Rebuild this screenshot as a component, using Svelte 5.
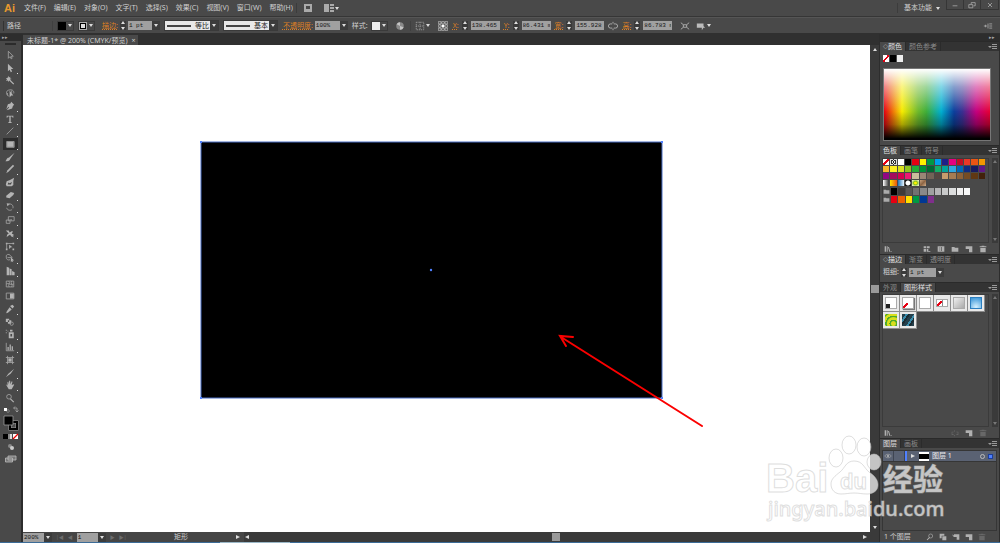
<script lang="ts">
	const menus = ['文件(F)', '编辑(E)', '对象(O)', '文字(T)', '选择(S)', '效果(C)', '视图(V)', '窗口(W)', '帮助(H)'];

	// fill = solid shape, line = stroked shape, both on a 12x12 grid
	const tools = [
		{ name: '选择工具', line: 'M4 1.5V10l2-2 1.4 2.6 1.2-.7L7.400 7.500H10z', fill: '' },
		{ name: '直接选择工具', fill: 'M3.500 1V10l2-2 1.500 3 1.500-.7L7.200 7.300H10z', line: '', more: true },
		{ name: '魔棒工具', fill: 'M4 1l.7 2L6.500 2 6 4l2 .7L6 5.500l5 5-1 1-5-5L4 8.500 3.300 6.500 1 7l1.500-2L1 3.500l2 0z', line: '' },
		{ name: '套索工具', fill: 'M5.500 3v8.500l2-2.500 2.500 0z', line: 'M4 9C1 8.500 1 3 4.500 2.500 8.500 1.500 11 3 10.500 6.500M3 6c0 2 0 3 1 4M8 3v4' },
		{ name: '钢笔工具', fill: 'M7.500 1l3.500 3.500-1.500 1.500L8.500 9 2 11l3-3.500-.7-.6L1.500 10 3.500 4 6.500 3z', line: '', more: true },
		{ name: '文字工具', fill: 'M2 2h8v2.500H9.300L8.500 3H6.800v6.500L8 10v.7H4V10l1.200-.5V3H3.500L2.700 4.500H2z', line: '', more: true },
		{ name: '直线段工具', fill: '', line: 'M2 10l8-8', more: true },
		{ name: '矩形工具', fill: 'M2.500 3.500h8v6h-8z', line: 'M2 3h9v7H2z', more: true, active: true },
		{ name: '画笔工具', fill: 'M11.500 1L6.500 8C5.500 11 3 11 .5 11c1.500-.8 1-4 4-4z', line: '' },
		{ name: '铅笔工具', fill: 'M9.500 1L11 2.500 4.500 9 1.500 11 3 7.500z', line: '', more: true },
		{ name: '斑点画笔工具', fill: 'M11 1L10 4.500v5L8 11H2L1 9l1-4 4-1.500zM4 6.500L3.300 9H7l1.500-3-3 1.500z', line: '' },
		{ name: '橡皮擦工具', fill: 'M7 2.500l4 1-1 2.500-4.500 4-4-1v-2z', line: '', more: true },
		{ name: '旋转工具', fill: 'M2 1.500l4 .5-3 3z', line: 'M3 3.500C7 .5 10.500 4 9.500 7.500M8.500 9C6 11 2.500 9.500 2 7', more: true },
		{ name: '比例缩放工具', fill: 'M6 5h2v2z', line: 'M4 2h7v5H4zM1.500 6h4.500v4h-4.500z', more: true },
		{ name: '宽度工具', fill: 'M1 3l3.500 0 1 2.500 3-2 1 1-1.500 2 3 2L9 9.500l2 1.500-3-.5L6 8 3.500 9.500 2 11l.5-3 2-1.500z', line: '', more: true },
		{ name: '自由变换工具', fill: 'M5 4.500l4 3H7l-2 2zM1 2h2v2H1zM9 2h2v2H9zM1 9h2v2H1zM9 9h2v2H9z', line: 'M2 3h8M2 3v7' },
		{ name: '形状生成器工具', fill: 'M7 5l4 4H9l1 2-2-1-1 1z', line: 'M1.500 5a2.500 2.500 0 0 1 5-1.500 2.500 2.500 0 0 1 2 2.500M1.500 5C1.500 8 4 9 6 8M3 5.500h5', more: true },
		{ name: '透视网格工具', fill: 'M2 1l3 1v9H2zM5.500 3l2.500 1v7H5.500zM8.500 6l3 1.500V11h-3z', line: '', more: true },
		{ name: '网格工具', fill: '', line: 'M1.500 2.500h9v7h-9zM1.500 6C4 4 7 8 10.500 6M4.500 2.500C7 5 3 7 5 9.500M8 2.500C6 5 10 7 8 9.500' },
		{ name: '渐变工具', fill: 'M6 3h5v6H6z', line: 'M1.500 2.500h9v7h-9z' },
		{ name: '吸管工具', fill: 'M9 1l2 2-2 2.500-3-3zM5.500 4L8 6.500 3.500 10.500 1.500 11 2 9z', line: '', more: true },
		{ name: '混合工具', fill: 'M1 2h4v4H1zM3.500 4h4v4h-4z', line: 'M6 8a2 2 0 1 0 4 0 2 2 0 1 0-4 0' },
		{ name: '符号喷枪工具', fill: 'M6 1h3v2H6zM4.500 4h6v7h-6zM6.500 6v3h2V6zM1 1h1v1H1zM3 2h1v1H3zM1 4h1v1H1z', line: '', more: true },
		{ name: '柱形图工具', fill: 'M3 6h1.500v4H3zM5.500 3h1.500v7H5.500zM8 5h1.500v5H8z', line: 'M1.500 1v9.500H11', more: true },
		{ name: '画板工具', fill: 'M4 4h4v4H4z', line: 'M3 1v10M9 1v10M1 3h10M1 9h10' },
		{ name: '切片工具', fill: 'M11 1L7 6.500 5 8 4 7zM4 7L5 8 1 11z', line: '', more: true },
		{ name: '抓手工具', fill: 'M1 5l2 1.500V2.500l1-.5.7 3 .3-4h1.200l.3 4 1.500-3.500 1 .5-1 4L10.500 5l.5.7L8 11H4.500z', line: '', more: true },
		{ name: '缩放工具', fill: 'M7 6.500l4 4-1 1-4-4z', line: 'M2 4.500a2.800 2.800 0 1 0 5.600 0 2.800 2.800 0 1 0-5.600 0' }
	];

	const swatches = [
		['none', 'reg', '#ffffff', '#000000', '#e60012', '#fff100', '#009944', '#00a0e9', '#1d2088', '#e4007f', '#c30d23', '#e83828', '#ea5514', '#f39800'],
		['#f8b62d', '#fcee21', '#d9e021', '#8fc31f', '#22ac38', '#009139', '#006934', '#13ae67', '#00a29a', '#2ea7e0', '#0068b7', '#0f2c82', '#171c61', '#601986'],
		['#920783', '#a40b5d', '#d4004f', '#ea1a73', '#c9bc9c', '#998675', '#736357', '#534741', '#c69c6d', '#a67c52', '#8c6239', '#754c24', '#603813', '#42210b'],
		['fade', 'amber', 'sky', 'ring', 'leaf', 'clay']
	];
	const grays = ['#000000', '#3e3a39', '#595757', '#727171', '#898989', '#9fa0a0', '#b5b5b6', '#c9caca', '#dcdddd', '#efefef', '#f7f8f8'];
	const brights = ['#e60012', '#eb6100', '#ffe100', '#009944', '#003894', '#7f2f8c'];

	const transforms = [
		{ label: 'X:', value: '138.465 mm' },
		{ label: 'Y:', value: '86.431 mm' },
		{ label: '宽:', value: '155.928 mm', link: true },
		{ label: '高:', value: '86.783 mm' }
	];

	const styles = ['plain', 'shadow', 'empty', 'split', 'silver', 'azure', 'jungle', 'marine'];

	const glyphs = {
		library: 'M1 2h2v8H1zM4 2h1.500v8H4zM6 3l1.500 0 2 7H8zM10 9h1.500v1H10z',
		kinds: 'M1 2h4v3H1zM6 2h4v3H6zM1 6h4v4H1zM6 6h2v3h3v1H6z',
		options: 'M1 2h10v8H1zM3 4v1h2V4zM3 7v1h2V7zM6 3v6h1V3z',
		folder: 'M1 3h4l1 1h5v6H1z',
		page: 'M1 2h10v9H6V6H1z',
		trash: 'M4 1h4v1h3v1.500H1V2h3zM2 4.500h8V11H2z',
		unlink: 'M1 4h3v1H2v3h2v1H1zM8 4h3v5H8V8h2V5H8zM5 2h1v2H5zM5 9h1v2H5z',
		mask: 'M1 1h7v3H4v4H1zM5 5h6v6H5z',
		sublayer: 'M1 2l2 2V2h8v8H7V6H3L1 4z'
	};
</script>

{#snippet glyph(name: string, label: string, dim = false)}
	<button class="glyph" class:dim aria-label={label}>
		<svg viewBox="0 0 12 12"><path d={glyphs[name]} fill-rule="evenodd" /></svg>
	</button>
{/snippet}

{#snippet spinner()}
	<span class="spinner"><i class="up"></i><i class="down"></i></span>
{/snippet}

{#snippet tabs(names: string[], active: number, arrows = false)}
	<div class="tabs" role="tablist">
		{#each names as name, i}
			<button role="tab" class="tab" class:active={i === active} aria-selected={i === active}>
				{#if arrows && i === active}<span class="updown">◇</span>{/if}{name}
			</button>
		{/each}
		<button class="panel-menu" aria-label="面板菜单"><i class="down"></i><span></span></button>
	</div>
{/snippet}

<div class="app">
	<header class="menubar">
		<strong class="logo">Ai</strong>
		<nav>
			{#each menus as menu}<button>{menu}</button>{/each}
		</nav>
		<button class="bridge" aria-label="Bridge"><svg viewBox="0 0 10 10"><path d="M1 1h8v8H1zM3 3v3h4V3z" fill-rule="evenodd" /></svg></button>
		<button class="arrange" aria-label="排列文档"><svg viewBox="0 0 10 10"><path d="M0 1h5v8H0zM6 1h4v2H6zM6 4h4v2H6zM6 7h4v2H6z" /></svg><i class="down"></i></button>
		<button class="workspace">基本功能<i class="down"></i></button>
		<div class="window">
			<button aria-label="最小化"><svg viewBox="0 0 10 10"><path d="M2 6h6" /></svg></button>
			<button aria-label="还原"><svg viewBox="0 0 10 10"><path d="M4 4V2h5v4H7M1 4.500h5v4H1z" /></svg></button>
			<button aria-label="关闭"><svg viewBox="0 0 10 10"><path d="M2.500 2.500l5 5M7.500 2.500l-5 5" /></svg></button>
		</div>
	</header>

	<div class="control">
		<span class="kind">路径</span>
		<button class="pick" aria-label="填色"><span class="chip black"></span><i class="down"></i></button>
		<button class="pick" aria-label="描边颜色"><span class="chip outline"></span><i class="down"></i></button>
		<label class="field">
			<span class="hot">描边:</span>
			{@render spinner()}
			<span class="combo"><select class="short"><option>1 pt</option></select><i class="down"></i></span>
		</label>
		<button class="profile"><span class="stroke"></span><b>等比</b><i class="down"></i></button>
		<button class="profile"><span class="stroke"></span><b>基本</b><i class="down"></i></button>
		<label class="field opacity">
			<span class="hot">不透明度:</span>
			<span class="combo"><select class="wide"><option>100%</option></select><i class="down"></i></span>
		</label>
		<span class="style-label">样式:</span>
		<button class="pick" aria-label="图形样式"><span class="chip white"></span><i class="down"></i></button>
		<button class="icon recolor" aria-label="重新着色图稿">
			<svg viewBox="0 0 12 12"><circle cx="6" cy="6" r="4.500" fill="#8a8a8a" /><path d="M6 6V1.500A4.500 4.500 0 0 0 2 4zM6 6l4.300 1.500A4.500 4.500 0 0 1 6 10.500z" fill="#c5c5c5" /></svg>
		</button>
		<button class="icon align" aria-label="对齐">
			<svg viewBox="0 0 12 12"><path d="M1.500 1.500h9v9h-9zM6 1v10M1 6h10" stroke="#a0a0a0" stroke-dasharray="1.500 1" fill="none" /></svg><i class="down"></i>
		</button>
		<button class="icon anchor" aria-label="参考点">
			<svg viewBox="0 0 12 12"><path d="M2 2h8v8H2zM6 2v8M2 6h8" stroke="#aaa" fill="none" /><path d="M.5.5h3v3h-3zM4.500.5h3v3h-3zM8.500.5h3v3h-3zM.5 4.500h3v3h-3zM8.500 4.500h3v3h-3zM.5 8.500h3v3h-3zM4.500 8.500h3v3h-3zM8.500 8.500h3v3h-3z" fill="#555" stroke="#ccc" stroke-width=".7" /><path d="M4.500 4.500h3v3h-3z" fill="#fff" /></svg>
		</button>
		{#each transforms as t}
			<label class="field transform">
				<span class="hot">{t.label}</span>
				{@render spinner()}
				<input value={t.value} />
			</label>
			{#if t.link}
				<button class="icon link" aria-label="约束宽度和高度比例">
					<svg viewBox="0 0 12 12"><path d="M5 3.500H3a2.500 2.500 0 0 0 0 5h2M7 3.500h2a2.500 2.500 0 0 1 0 5H7M6 1v2M6 9v2" stroke="#bbb" fill="none" /></svg>
				</button>
			{/if}
		{/each}
		<button class="icon isolate" aria-label="隔离选中的对象">
			<svg viewBox="0 0 12 12"><path d="M1 2l3 2.500M11 2L8 4.500M1 10l3-2.500M11 10L8 7.500M4 4.500h4v3H4z" stroke="#bbb" fill="none" /></svg>
		</button>
		<button class="icon similar" aria-label="选择类似的对象">
			<svg viewBox="0 0 12 12"><path d="M1 3h8v5H1zM7 4l4 4H9l-2 3z" fill="#bbb" /></svg><i class="down"></i>
		</button>
		<button class="icon dock" aria-label="控制面板菜单">
			<svg viewBox="0 0 12 12"><path d="M1 6h4M3 4.500v3M6 3v6M7.500 3.500H11M7.500 6H11M7.500 8.500H11" stroke="#aaa" fill="none" /></svg>
		</button>
	</div>

	<div class="body">
		<aside class="toolbox">
			<div class="collapse left">▸▸</div>
			<div class="handle"></div>
			<div class="tools">
				{#each tools as tool}
					<button class="tool" class:active={tool.active} class:more={tool.more} aria-label={tool.name}>
						<svg viewBox="0 0 12 12">
							<path d={tool.fill} fill="#b4b4b4" fill-rule="evenodd" />
							<path d={tool.line} fill="none" stroke="#a2a2a2" />
						</svg>
					</button>
				{/each}
			</div>
			<svg class="colors" viewBox="0 0 16 60">
				<path d="M1 3h3v3H1z" fill="#fff" />
				<path d="M4 5h2v2H4z" fill="#111" stroke="#ccc" stroke-width=".5" />
				<path d="M11 3h3v4M12 1.500L10.500 3 12 4.500M12.500 5.500L14 7l1.500-1.500" fill="none" stroke="#aaa" stroke-width=".8" />
				<path d="M7 17h7v7H7z" fill="none" stroke="#999" stroke-width="3" />
				<path d="M7 17h7v7H7z" fill="none" stroke="#000" stroke-width="2" />
				<path d="M1 11h9v9H1z" fill="#000" stroke="#999" stroke-width=".8" />
				<path d="M0 29h5v5H0z" fill="#000" />
				<path d="M5 29h2v5H5z" fill="#888" />
				<path d="M7 29h2v5H7z" fill="#ddd" />
				<path d="M10 29h5v5h-5z" fill="#fff" />
				<path d="M10 34l5-5" stroke="#e00" stroke-width="1.200" />
				<circle cx="7" cy="41" r="2" fill="#888" />
				<circle cx="9" cy="43" r="2" fill="#ccc" />
				<path d="M5 51h8v4H5zM2.500 53h7v4h-7z" fill="#777" stroke="#bbb" stroke-width=".8" />
			</svg>
		</aside>

		<main>
			<div class="documents">
				<button class="document">未标题-1* @ 200% (CMYK/预览)<span>×</span></button>
			</div>
			<div class="view">
				<svg class="artboard">
					<rect x="178" y="97" width="461" height="256" fill="#000" stroke="#4a6fc4" />
					<path d="M177 96h2v2h-2zM638 96h2v2h-2zM177 352h2v2h-2zM638 352h2v2h-2z" fill="#4f80ff" />
					<circle cx="408" cy="225" r="1.200" fill="#4f80ff" />
					<path d="M679 381L538 292M550 292l-13-1 6 10" fill="none" stroke="#fb0000" stroke-width="2" stroke-linecap="round" />
				</svg>
				<div class="scroll vertical"><i class="up"></i><span class="thumb"></span><i class="down"></i></div>
			</div>
			<footer class="status">
				<span class="combo"><select class="zoom" aria-label="缩放"><option>200%</option></select><i class="down"></i></span>
				<span class="pager">|◀</span><span class="pager">◀</span>
				<span class="combo"><select class="board" aria-label="画板"><option>1</option></select><i class="down"></i></span>
				<span class="pager">▶</span><span class="pager">▶|</span>
				<span class="current">矩形</span>
				<i class="right"></i>
				<div class="scroll horizontal"><i class="back"></i><span class="thumb"></span><i class="right"></i></div>
			</footer>
		</main>

		<aside class="panels">
			<div class="collapse">▸▸</div>

			{@render tabs(['颜色', '颜色参考'], 0, true)}
			<section class="color">
				<div class="basics"><span class="none"></span><span class="black"></span><span class="white"></span></div>
				<div class="spectrum"></div>
			</section>

			{@render tabs(['色板', '画笔', '符号'], 0)}
			<section class="swatches">
				<div class="well">
					<div class="rows">
						{#each swatches as row}
							<div class="row">
								{#each row as c}
									{#if c.startsWith('#')}
										<span style="background: {c}"></span>
									{:else}
										<span class={c}></span>
									{/if}
								{/each}
							</div>
						{/each}
						{#each [grays, brights] as group}
							<div class="row group">
								<svg viewBox="0 0 12 12"><path d={glyphs.folder} /></svg>
								{#each group as c}<span style="background: {c}"></span>{/each}
							</div>
						{/each}
					</div>
					<div class="scroll"><i class="up"></i><i class="down"></i></div>
				</div>
				<div class="actions">
					{@render glyph('library', '色板库')}
					<span class="fill"></span>
					{@render glyph('kinds', '色板类型')}
					{@render glyph('options', '色板选项')}
					{@render glyph('folder', '新建颜色组')}
					{@render glyph('page', '新建色板')}
					{@render glyph('trash', '删除色板')}
				</div>
			</section>

			{@render tabs(['描边', '渐变', '透明度'], 0, true)}
			<section class="weight">
				<label class="field">
					<span>粗细:</span>
					{@render spinner()}
					<span class="combo"><select class="thick"><option>1 pt</option></select><i class="down"></i></span>
				</label>
			</section>

			{@render tabs(['外观', '图形样式'], 1)}
			<section class="styles">
				<div class="well">
					<div class="cells">
						{#each styles as s}<button class="cell" aria-label={s}><span class={s}></span></button>{/each}
					</div>
					<div class="scroll"><i class="up"></i><i class="down"></i></div>
				</div>
				<div class="actions">
					{@render glyph('library', '图形样式库')}
					<span class="fill"></span>
					{@render glyph('unlink', '断开链接', true)}
					{@render glyph('page', '新建图形样式')}
					{@render glyph('trash', '删除图形样式', true)}
				</div>
			</section>

			{@render tabs(['图层', '画板'], 0)}
			<section class="layers">
				<div class="list">
					<div class="layer">
						<svg class="eye" viewBox="0 0 12 12"><path d="M1 6c2.500-3.500 7.500-3.500 10 0-2.500 3.500-7.500 3.500-10 0z" fill="none" stroke="#aaa" /><circle cx="6" cy="6" r="1.500" fill="#bbb" /></svg>
						<span class="lock"></span>
						<span class="stripe"></span>
						<i class="right"></i>
						<span class="thumbnail"></span>
						<span class="name">图层 1</span>
						<span class="target"></span>
						<span class="selected"></span>
					</div>
				</div>
				<div class="actions">
					<span class="count">1 个图层</span>
					<span class="fill"></span>
					<button class="glyph" aria-label="定位对象"><svg viewBox="0 0 12 12"><circle cx="7" cy="4.500" r="3" fill="none" stroke="#aaa" /><path d="M5 6l1 1-4 4-1-1z" /></svg></button>
					{@render glyph('mask', '剪切蒙版')}
					{@render glyph('sublayer', '新建子图层')}
					{@render glyph('page', '新建图层')}
					{@render glyph('trash', '删除图层', true)}
				</div>
			</section>
		</aside>
	</div>

	<div class="taskbar"></div>

	<svg class="watermark" viewBox="0 0 190 100" aria-label="Baidu 经验">
		<text class="brand" x="3" y="62">Bai</text>
		<ellipse cx="73" cy="28" rx="7" ry="9" />
		<ellipse cx="86" cy="15" rx="7" ry="9" />
		<ellipse cx="101" cy="17" rx="7" ry="9" />
		<ellipse cx="111" cy="32" rx="7" ry="8" />
		<path d="M91 31c9 0 10 7 15 11 6 4 9 8 9 13 0 6-5 9-11 9-5 0-8-1-13-1s-8 1-13 1c-6 0-10-4-10-10 0-5 4-8 9-12 5-4 6-11 14-11z" />
		<text class="du" x="77" y="59">du</text>
		<text class="cn" x="120" y="60">经验</text>
		<text class="url" x="5" y="86">jingyan.baidu.com</text>
	</svg>
</div>

<style>
	:global(body) {
		margin: 0;
		background: #494949;
	}

	.app {
		position: relative;
		display: flex;
		flex-direction: column;
		height: 100vh;
		overflow: hidden;
		background: #494949;
		color: #cfcfcf;
		font: 7px/10px 'Noto Sans', 'Noto Sans CJK SC', sans-serif;
	}

	* {
		box-sizing: border-box;
	}

	button,
	select,
	input {
		margin: 0;
		padding: 0;
		border: 0;
		border-radius: 0;
		background: none;
		color: inherit;
		font: inherit;
		white-space: nowrap;
		flex: none;
	}

	svg {
		display: block;
	}

	i {
		flex: none;
		width: 0;
		height: 0;
		border: 2px solid transparent;
	}

	i.down {
		border-top: 3px solid #ddd;
		border-bottom: 0;
	}

	i.up {
		border-bottom: 3px solid #ddd;
		border-top: 0;
	}

	i.right {
		border-left: 4px solid #ddd;
		border-right: 0;
	}

	i.back {
		border-right: 4px solid #ddd;
		border-left: 0;
	}

	/* menu bar */
	.menubar {
		display: flex;
		align-items: center;
		height: 17px;
		flex: none;
		border-bottom: 1px solid #363636;
	}

	.logo {
		width: 20px;
		padding-left: 4px;
		color: #e8992e;
		font: bold 11px/14px 'Liberation Sans', sans-serif;
	}

	nav {
		display: flex;
		gap: 8px;
		padding: 0 3px 0 4px;
		border-right: 1px solid #3c3c3c;
	}

	.bridge {
		margin-left: 6px;
	}

	.menubar svg {
		width: 10px;
		height: 10px;
		fill: #aaa;
	}

	.arrange {
		display: flex;
		align-items: center;
		gap: 1px;
		margin-left: 11px;
	}

	.workspace {
		display: flex;
		align-items: center;
		gap: 4px;
		margin-left: auto;
		padding: 0 6px;
		border-left: 1px solid #3c3c3c;
	}

	.window {
		display: flex;
		align-self: flex-start;
		margin-right: 1px;
		border: 1px solid #363636;
		border-top: 0;
	}

	.window button {
		display: grid;
		place-items: center;
		width: 17px;
		height: 9px;
		border-right: 1px solid #363636;
	}

	.window button:last-child {
		border-right: 0;
	}

	.window svg {
		width: 8px;
		height: 8px;
		fill: none;
		stroke: #aaa;
	}

	/* control bar */
	.control {
		display: flex;
		align-items: center;
		height: 17px;
		flex: none;
		border-top: 1px solid #555;
		border-bottom: 1px solid #303030;
	}

	.kind {
		flex: none;
		width: 50px;
		margin: 0 4px 0 3px;
		padding-left: 3px;
		border-left: 1px solid #333;
		border-right: 1px solid #404040;
	}

	.pick {
		display: flex;
		align-items: center;
		width: 17px;
		margin-right: 4px;
		border: 1px solid #3a3a3a;
	}

	.chip {
		width: 8px;
		height: 8px;
		margin-right: 2px;
	}

	.black {
		background: #000;
	}

	.white {
		background: #eee;
	}

	.outline {
		border: 2px solid #000;
		outline: 1px solid #aaa;
		outline-offset: -1px;
		background: #ddd;
	}

	.field {
		display: flex;
		align-items: center;
		gap: 2px;
		flex: none;
	}

	.control .field {
		margin: 0 4px 0 3px;
	}

	.control .transform {
		gap: 3px;
		margin: 0 1px 0 3px;
	}

	.control .opacity {
		margin: 0 4px 0 1px;
	}

	.hot {
		color: #dc7f24;
		text-decoration: underline dotted;
	}

	.spinner {
		display: flex;
		flex-direction: column;
		align-items: center;
		justify-content: space-between;
		width: 6px;
		height: 9px;
		background: #3a3a3a;
	}

	.combo {
		display: flex;
		align-items: center;
		flex: none;
		background: #3c3c3c;
	}

	.combo i,
	.profile i {
		margin: 0 2px;
	}

	select,
	input {
		appearance: none;
		height: 9px;
		padding: 0 1px;
		background: #a0a0a0;
		color: #151515;
		font: 6px/9px 'Liberation Mono', monospace;
	}

	.short {
		width: 24px;
	}

	.wide {
		width: 25px;
	}

	.thick {
		width: 27px;
	}

	.transform input {
		width: 29px;
	}

	.profile {
		display: flex;
		align-items: center;
		width: 55px;
		margin-right: 4px;
		border: 1px solid #3a3a3a;
		background: #3c3c3c;
	}

	.profile b {
		height: 9px;
		background: #e8e8e8;
		color: #222;
		font-weight: 400;
		line-height: 9px;
		padding: 0 1px;
	}

	.stroke {
		flex: 1;
		height: 9px;
		background: linear-gradient(#444, #444) center / 24px 2px no-repeat #e8e8e8;
	}

	.style-label {
		margin-right: 3px;
		flex: none;
	}

	.icon {
		display: flex;
		align-items: center;
		gap: 1px;
	}

	.icon svg {
		width: 10px;
		height: 10px;
	}

	.recolor {
		margin: 0 4px 0 3px;
		padding-right: 5px;
		border-right: 1px solid #404040;
	}

	.align {
		margin-right: 8px;
	}

	.anchor {
		margin-right: 2px;
	}

	.link {
		margin: 0 1px 0 3px;
	}

	.isolate {
		margin: 0 6px 0 7px;
	}

	.dock {
		margin-left: auto;
		margin-right: 7px;
	}

	/* work area */
	.body {
		display: flex;
		flex: 1;
		min-height: 0;
		background: #2d2d2d;
	}

	.toolbox {
		width: 21px;
		flex: none;
		margin-right: 2px;
		background: #494949;
	}

	.collapse {
		height: 7px;
		flex: none;
		padding-right: 4px;
		background: #2d2d2d;
		color: #aaa;
		font-size: 5px;
		line-height: 7px;
		text-align: right;
	}

	.collapse.left {
		padding-left: 2px;
		text-align: left;
	}

	.handle {
		width: 11px;
		height: 2px;
		margin: 2px auto 4px;
		background: #2b2b2b;
	}

	.tools {
		display: flex;
		flex-direction: column;
		align-items: center;
		justify-content: space-between;
		height: 355px;
	}

	.tool {
		position: relative;
		width: 15px;
		height: 12px;
		padding: 1px 2px;
	}

	.tool svg {
		width: 10px;
		height: 10px;
	}

	.tool.active {
		background: #2c2c2c;
	}

	.tool.more::after {
		content: '';
		position: absolute;
		right: 0;
		bottom: 0;
		width: 1px;
		height: 1px;
		background: #ddd;
	}

	.colors {
		width: 16px;
		height: 60px;
		margin: 1px 0 0 3px;
	}

	main {
		display: flex;
		flex-direction: column;
		flex: 1;
		min-width: 0;
	}

	.documents {
		display: flex;
		height: 11px;
		flex: none;
		padding-top: 1px;
		background: #303030;
	}

	.document {
		display: flex;
		align-items: center;
		gap: 4px;
		padding: 0 2px 0 4px;
		background: #494949;
		line-height: 9px;
	}

	.view {
		display: flex;
		flex: 1;
		min-height: 0;
	}

	.artboard {
		flex: 1;
		min-width: 0;
		height: 100%;
		background: #fff;
	}

	.scroll {
		display: flex;
		align-items: center;
		justify-content: space-between;
		background: #3a3a3a;
	}

	.vertical {
		flex-direction: column;
		width: 9px;
		padding: 3px 0;
	}

	.thumb {
		width: 8px;
		height: 8px;
		background: #9a9a9a;
	}

	.status {
		display: flex;
		align-items: center;
		gap: 4px;
		height: 10px;
		flex: none;
		background: #454545;
	}

	.zoom,
	.board {
		width: 21px;
	}

	.pager {
		color: #6c6c6c;
		font-size: 5px;
	}

	.current {
		flex: none;
		width: 101px;
		text-align: center;
	}

	.horizontal {
		flex: 1;
		height: 10px;
		padding: 0 12px 0 1px;
	}

	/* panels */
	.panels {
		display: flex;
		flex-direction: column;
		width: 119px;
		flex: none;
		margin: 0 1px;
		background: #494949;
	}

	.tabs {
		display: flex;
		height: 10px;
		flex: none;
		background: #333;
		border-top: 1px solid #2a2a2a;
	}

	.tab {
		display: flex;
		align-items: center;
		padding: 0 3px;
		border-right: 1px solid #2b2b2b;
		color: #8b8b8b;
		line-height: 9px;
	}

	.tab.active {
		background: #494949;
		color: #e0e0e0;
	}

	.updown {
		font-size: 5px;
	}

	.panel-menu {
		display: flex;
		align-items: center;
		margin: 0 2px 0 auto;
	}

	.panel-menu i {
		border-width: 2px;
		border-bottom: 0;
		border-top-color: #999;
	}

	.panel-menu span {
		width: 5px;
		height: 5px;
		background: repeating-linear-gradient(#999 0 1px, transparent 1px 2px);
	}

	.color {
		height: 94px;
		flex: none;
		padding: 4px 3px;
	}

	.basics {
		display: flex;
		gap: 1px;
		margin-bottom: 6px;
	}

	.basics span {
		width: 6px;
		height: 7px;
	}

	.none {
		background: linear-gradient(to bottom right, #fff 40%, #e60012 40% 60%, #fff 60%);
	}

	.spectrum {
		width: 108px;
		height: 73px;
		border: 1px solid #777;
		background:
			linear-gradient(#fff 0%, rgba(255, 255, 255, 0.5) 25%, transparent 60%, rgba(0, 0, 0, 0.3) 78%, #000 98%),
			linear-gradient(90deg, #e60012, #f7ec00 17%, #6fb92c 32%, #3fae3a 40%, #00afd0 54%, #0b3f9c 66%, #3b2f91 74%, #c4007f 87%, #e60033);
	}

	.swatches {
		display: flex;
		flex-direction: column;
		height: 99px;
		flex: none;
		padding: 3px 1px 0 2px;
	}

	.well {
		display: flex;
		justify-content: space-between;
		flex: 1;
		min-height: 0;
	}

	.well .scroll {
		flex-direction: column;
		width: 6px;
		padding: 2px 0;
	}

	.well i.up {
		border-bottom-color: #777;
	}

	.well i.down {
		border-top-color: #777;
	}

	.rows,
	.cells {
		width: 107px;
		border: 1px solid #3b3b3b;
	}

	.row {
		display: grid;
		grid-template-columns: repeat(14, 1fr);
		gap: 1px;
		width: 102px;
		height: 6px;
		margin-bottom: 1px;
	}

	.row.group {
		margin-top: 2px;
	}

	.row svg {
		width: 7px;
		height: 7px;
		fill: #aaa;
	}

	.reg {
		background: radial-gradient(#222 1px, #eee 1px 2px, #333 2px 3px, #ddd 3px);
	}

	.fade {
		background: linear-gradient(90deg, #fff, #333);
	}

	.amber {
		background: linear-gradient(90deg, #ffe100, #ea5514);
	}

	.sky {
		background: linear-gradient(90deg, #1f73b8, #e8f4fc);
	}

	.ring {
		background: radial-gradient(#fff 2px, #111 3px);
	}

	.leaf {
		background: radial-gradient(#fff200 1px, #8fc31f 2px, #e5f0c0 4px);
	}

	.clay {
		background: linear-gradient(135deg, #c9a27c, #8d6544, #d2b08d);
	}

	.actions {
		display: flex;
		align-items: center;
		gap: 6px;
		height: 11px;
		flex: none;
		padding: 0 11px 0 2px;
	}

	.fill {
		flex: 1;
	}

	.layers .actions {
		gap: 5px;
	}

	.count {
		white-space: nowrap;
	}

	.glyph svg {
		width: 8px;
		height: 8px;
		fill: #b0b0b0;
	}

	.glyph.dim {
		opacity: 0.3;
	}

	.weight {
		height: 18px;
		flex: none;
		padding: 3px;
	}

	.styles {
		display: flex;
		flex-direction: column;
		height: 146px;
		flex: none;
		padding: 2px 1px 0 2px;
	}

	.cells {
		display: grid;
		grid-template-columns: repeat(6, 17px);
		grid-auto-rows: 17px;
	}

	.cell {
		padding: 2px;
		border: 1px solid #8c8c8c;
		border-width: 0 1px 1px 0;
		background: #e9e9e9;
	}

	.cell span {
		display: block;
		height: 100%;
		border: 1px solid #aaa;
		background: #fff;
	}

	.cell .plain {
		background: linear-gradient(#222, #222) left bottom / 4px 4px no-repeat #fff;
	}

	.cell .shadow {
		background: linear-gradient(135deg, #fff 35%, #e60012 35% 65%, #fff 65%) left bottom / 5px 5px no-repeat #fff;
		box-shadow: 1px 1px 1px #777;
	}

	.cell .split {
		height: 8px;
		background:
			linear-gradient(135deg, #fff 35%, #e60012 35% 65%, #fff 65%) left bottom / 5px 5px no-repeat,
			linear-gradient(90deg, #fff 50%, #888 50% 58%, #fff 58%);
	}

	.cell .silver {
		background: linear-gradient(135deg, #efefef, #aaa);
	}

	.cell .azure {
		border-color: #2c7fc0;
		background: radial-gradient(circle at 50% 90%, #d6f1ff, #3492d6);
	}

	.cell .jungle {
		border: 0;
		background: repeating-radial-gradient(circle at 70% 80%, #d8de1d 0 2px, #4caa2c 3px 4px);
	}

	.cell .marine {
		border: 0;
		background: repeating-linear-gradient(125deg, #25404c 0 3px, #3a8cab 3px 5px, #1c2c33 5px 7px);
	}

	.layers {
		display: flex;
		flex-direction: column;
		flex: 1;
		min-height: 0;
		padding: 2px 2px 0;
	}

	.list {
		flex: 1;
		border: 1px solid #363636;
	}

	.layer {
		display: flex;
		align-items: center;
		height: 11px;
		background: #5a6273;
		border-bottom: 1px solid #363636;
	}

	.eye {
		width: 8px;
		height: 8px;
		margin: 0 1px;
	}

	.lock {
		width: 12px;
		height: 10px;
		border: 1px solid #3f4552;
		border-width: 0 1px;
	}

	.stripe {
		width: 2px;
		height: 10px;
		background: #4f80ff;
	}

	.layer i {
		margin: 0 4px;
	}

	.thumbnail {
		width: 10px;
		height: 9px;
		border: solid #fff;
		border-width: 2px 0;
		background: #000;
	}

	.name {
		flex: 1;
		padding-left: 3px;
		color: #eee;
	}

	.target {
		width: 5px;
		height: 5px;
		margin-right: 3px;
		border: 1px solid #bbb;
		border-radius: 50%;
	}

	.selected {
		width: 5px;
		height: 5px;
		margin-right: 3px;
		border: 1px solid #1c3e9a;
		background: #4f80ff;
	}

	.taskbar {
		height: 1px;
		flex: none;
		background: linear-gradient(90deg, #3c6c98 22%, #9bb8c8 22% 29%, #3c6c98 29%);
	}

	/* watermark over the lower right corner */
	.watermark {
		position: absolute;
		right: 47px;
		bottom: 13px;
		width: 190px;
		height: 100px;
		fill: rgba(255, 255, 255, 0.7);
		stroke: rgba(190, 190, 190, 0.5);
		stroke-width: 1px;
		pointer-events: none;
		font-family: 'Liberation Sans', sans-serif;
		font-weight: 700;
	}

	.brand {
		font-size: 40px;
	}

	.du {
		font-size: 22px;
	}

	.cn {
		font-size: 30px;
		font-family: 'Noto Sans CJK SC', sans-serif;
	}

	.url {
		font-size: 20px;
		font-family: 'Noto Sans', sans-serif;
		font-weight: 500;
	}
</style>
